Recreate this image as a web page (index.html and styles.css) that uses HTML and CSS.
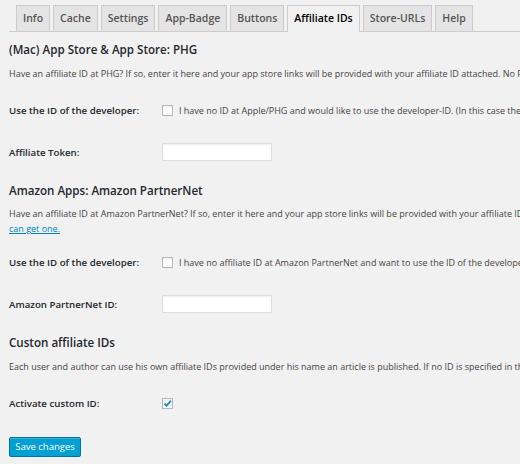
FILE: index.html
```html
<!DOCTYPE html>
<html>
<head>
<meta charset="utf-8">
<link rel="stylesheet" href="styles.css">
</head>
<body>
<div class="wrap">
  <nav class="tabs">
    <span class="tab">Info</span>
    <span class="tab">Cache</span>
    <span class="tab">Settings</span>
    <span class="tab">App-Badge</span>
    <span class="tab">Buttons</span>
    <span class="tab active">Affiliate IDs</span>
    <span class="tab">Store-URLs</span>
    <span class="tab">Help</span>
  </nav>

  <h2 class="title">(Mac) App Store &amp; App Store: PHG</h2>
  <p class="desc">Have an affiliate ID at PHG? If so, enter it here and your app store links will be provided with your affiliate ID attached. No PHG affiliate ID yet? Here you can get one.</p>
  <div class="row">
    <div class="label">Use the ID of the developer:</div>
    <div class="field"><span class="check"></span><span class="cl">I have no ID at Apple/PHG and would like to use the developer-ID. (In this case the developer gets the commission.)</span></div>
  </div>
  <div class="row">
    <div class="label">Affiliate Token:</div>
    <div class="field"><span class="input"></span></div>
  </div>

  <h2 class="title">Amazon Apps: Amazon PartnerNet</h2>
  <p class="desc desc-2">Have an affiliate ID at Amazon PartnerNet? If so, enter it here and your app store links will be provided with your affiliate ID attached. No ID yet? Here you<br><a class="link" href="#">can get one.</a></p>
  <div class="row">
    <div class="label">Use the ID of the developer:</div>
    <div class="field"><span class="check"></span><span class="cl">I have no affiliate ID at Amazon PartnerNet and want to use the ID of the developer.</span></div>
  </div>
  <div class="row">
    <div class="label">Amazon PartnerNet ID:</div>
    <div class="field"><span class="input"></span></div>
  </div>

  <h2 class="title">Custon affiliate IDs</h2>
  <p class="desc">Each user and author can use his own affiliate IDs provided under his name an article is published. If no ID is specified in the profile, the default IDs are used.</p>
  <div class="row">
    <div class="label">Activate custom ID:</div>
    <div class="field"><span class="check checked"><svg viewBox="0 0 11 11" width="11" height="11"><path d="M2.4 5.6 L4.5 7.8 L8.9 2.6" fill="none" stroke="#1e8cbe" stroke-width="1.9"/></svg></span></div>
  </div>

  <div class="actions"><span class="button">Save changes</span></div>
</div>
</body>
</html>
```
FILE: styles.css
```css
html, body {
  margin: 0;
  padding: 0;
  background: #f1f1f1;
  overflow: hidden;
}
body {
  font-family: "Open Sans", "Noto Sans", sans-serif;
  color: #444;
  width: 520px;
  height: 464px;
}
.wrap {
  padding-left: 9px;
  width: 900px;
}
.tabs {
  display: flex;
  align-items: flex-end;
  gap: 3px;
  padding: 5px 0 0 7px;
  border-bottom: 1px solid #ccc;
  height: 26px;
}
.tab {
  box-sizing: border-box;
  height: 26px;
  line-height: 25px;
  padding: 0 6px;
  border: 1px solid #ccc;
  border-bottom: none;
  background: #e4e4e4;
  color: #555;
  font-size: 10.5px;
  font-weight: 600;
  white-space: nowrap;
}
.tab.active {
  background: #f1f1f1;
  color: #000;
  height: 27px;
  margin-bottom: -1px;
}
.title {
  margin: 10px 0 0;
  font-size: 11.6px;
  line-height: 16px;
  font-weight: 600;
  color: #23282d;
}
.desc {
  margin: 8px 0 8px;
  font-size: 9px;
  line-height: 15px;
  white-space: nowrap;
  color: #444;
}
.desc-2 {
  margin-top: 7px;
  margin-bottom: 5px;
}
.link {
  color: #0085c4;
  text-decoration: underline;
}
.row {
  display: flex;
  align-items: center;
  height: 42px;
}
.label {
  width: 153px;
  font-size: 9.7px;
  font-weight: 600;
  color: #23282d;
  white-space: nowrap;
}
.field {
  display: flex;
  align-items: center;
  font-size: 9px;
  white-space: nowrap;
  color: #444;
}
.check {
  box-sizing: border-box;
  width: 11px;
  height: 11px;
  border: 1px solid #b4b9be;
  background: #fff;
  box-shadow: inset 0 1px 2px rgba(0,0,0,0.07);
  margin-right: 6px;
  position: relative;
}
.check svg {
  position: absolute;
  left: -1px;
  top: -1px;
}
.input {
  box-sizing: border-box;
  display: block;
  width: 110px;
  height: 18px;
  border: 1px solid #ddd;
  background: #fff;
  box-shadow: inset 0 1px 2px rgba(0,0,0,0.07);
}
.actions {
  margin-top: 9px;
}
.button {
  display: inline-block;
  box-sizing: border-box;
  height: 20px;
  line-height: 18px;
  width: 72px;
  text-align: center;
  background: #00a0d2;
  border: 1px solid #0073aa;
  border-radius: 2px;
  color: #fff;
  font-size: 9.5px;
  box-shadow: inset 0 1px 0 rgba(120,200,230,0.5);
}
```
